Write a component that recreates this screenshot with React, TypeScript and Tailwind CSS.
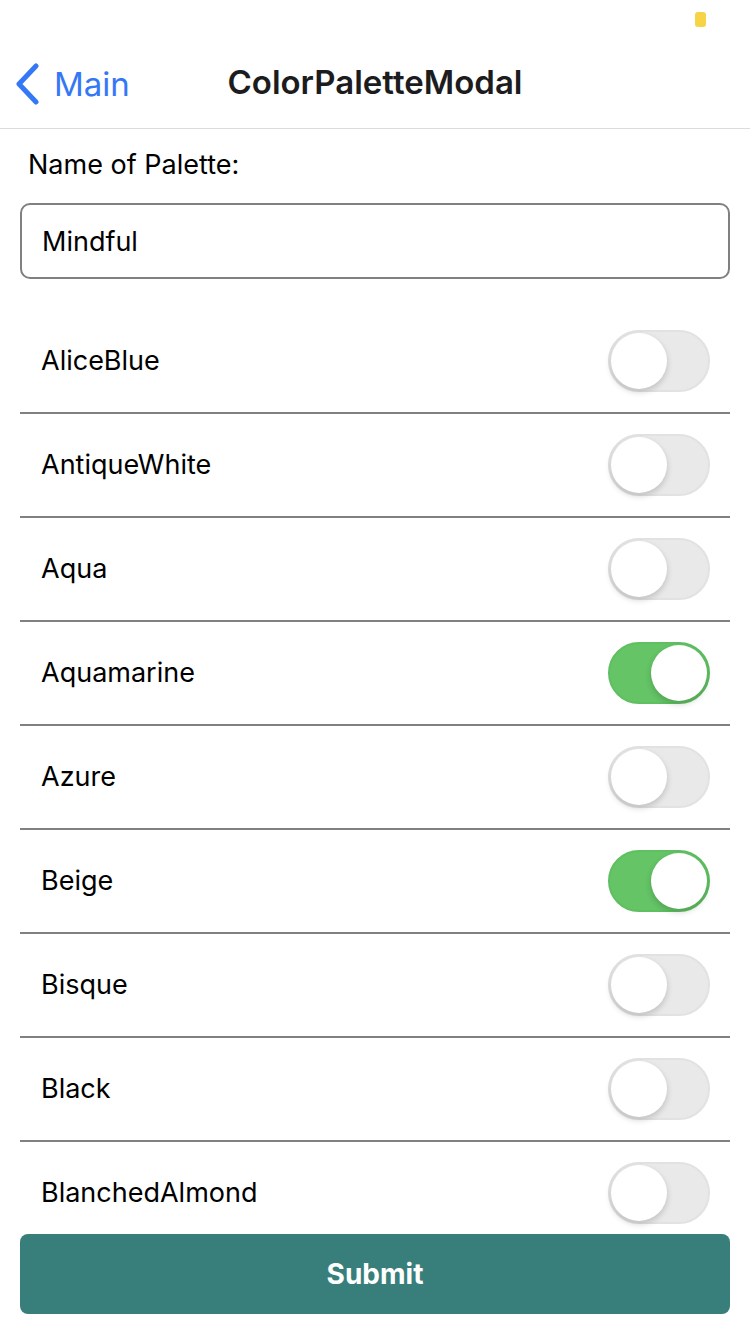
import React, { useState } from 'react';

const COLORS = [
  { name: 'AliceBlue', on: false },
  { name: 'AntiqueWhite', on: false },
  { name: 'Aqua', on: false },
  { name: 'Aquamarine', on: true },
  { name: 'Azure', on: false },
  { name: 'Beige', on: true },
  { name: 'Bisque', on: false },
  { name: 'Black', on: false },
  { name: 'BlanchedAlmond', on: false },
];

const Toggle: React.FC<{ on: boolean; onChange: () => void }> = ({ on, onChange }) => (
  <button
    onClick={onChange}
    className={
      on
        ? 'flex h-[62px] w-[102px] items-center justify-end rounded-full border-[2px] border-[#5fbf61] bg-[#64c466] px-[1px]'
        : 'flex h-[62px] w-[102px] items-center justify-start rounded-full border-[2px] border-[#e2e2e2] bg-[#e9e9e9] px-[1px]'
    }
  >
    <span className="block h-[56px] w-[56px] rounded-full bg-white shadow-[0_3px_6px_rgba(0,0,0,0.18)]" />
  </button>
);

export default function App() {
  const [items, setItems] = useState(COLORS);
  const [name, setName] = useState('Mindful');

  const toggle = (i: number) =>
    setItems(items.map((it, j) => (j === i ? { ...it, on: !it.on } : it)));

  return (
    <div
      className="flex h-[1334px] w-[750px] flex-col overflow-hidden bg-white text-black"
      style={{ fontFamily: 'Inter, "Noto Sans", sans-serif' }}
    >
      {/* status bar */}
      <div className="flex h-[40px] shrink-0 justify-end pr-[44px] pt-[12px]">
        <div className="h-[15px] w-[11px] rounded-[3px] bg-[#f7d447]" />
      </div>

      {/* nav */}
      <div className="relative flex h-[89px] shrink-0 items-center justify-center border-b border-[#dcdcdc]">
        <div className="absolute left-[14px] top-[23px] flex items-center gap-[14px] text-[#3478f6]">
          <svg width="26" height="42" viewBox="0 0 26 42" fill="none">
            <path d="M22 3 L5 21 L22 39" stroke="#3478f6" strokeWidth="5" strokeLinecap="round" strokeLinejoin="round" />
          </svg>
          <span className="text-[33px] leading-none">Main</span>
        </div>
        <span className="-mt-[2px] text-[33px] font-semibold text-[#1c1c1e]">ColorPaletteModal</span>
      </div>

      {/* form */}
      <div className="flex min-h-0 flex-1 flex-col px-[20px]">
        <label className="pl-[8px] pt-[20px] text-[27px] leading-[32px]">Name of Palette:</label>
        <input
          value={name}
          onChange={(e) => setName(e.target.value)}
          className="mt-[22px] h-[76px] w-full shrink-0 rounded-[10px] border-[2px] border-[#808080] px-[20px] text-[27px] outline-none"
        />

        <div className="mt-[31px] min-h-0 flex-1 overflow-hidden">
          {items.map((it, i) => (
            <div
              key={it.name}
              className="flex h-[104px] items-center justify-between border-b-[2px] border-[#808080] pl-[21px] pr-[20px]"
            >
              <span className="text-[27px]">{it.name}</span>
              <Toggle on={it.on} onChange={() => toggle(i)} />
            </div>
          ))}
        </div>

        <button className="mb-[20px] h-[80px] w-full shrink-0 rounded-[8px] bg-[#387f7c] text-[28px] font-bold text-white">
          Submit
        </button>
      </div>
    </div>
  );
}
